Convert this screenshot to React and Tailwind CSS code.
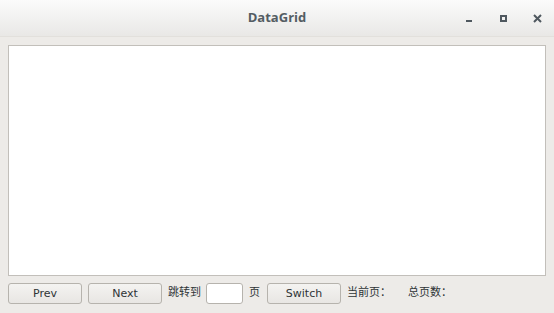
import React from 'react';

const Btn = ({ children, w = 'w-[74px]' }) => (
  <button className={`${w} h-[21px] rounded-[3px] border border-[#b6b3ad] bg-gradient-to-b from-[#f4f3f1] to-[#e8e6e3] text-[11px] text-[#2e3436] leading-none flex items-center justify-center`}>
    {children}
  </button>
);

const App = () => {
  return (
    <div className="w-[554px] h-[313px] flex flex-col bg-[#edebe8] overflow-hidden" style={{ fontFamily: '"DejaVu Sans", "Noto Sans CJK SC", sans-serif' }}>
      <div className="h-[37px] shrink-0 relative flex items-center justify-center bg-gradient-to-b from-[#fbfbfb] to-[#e9e8e6] border-b border-[#e2e0dc]">
        <span className="text-[13px] font-bold text-[#545d63]" style={{ fontFamily: '"Open Sans", "DejaVu Sans", sans-serif' }}>DataGrid</span>
        <div className="absolute right-0 top-0 h-full flex items-center">
          <div className="w-[34px] flex justify-center">
            <div className="w-[6px] h-[2px] bg-[#4f585f] mt-[6px]" />
          </div>
          <div className="w-[34px] flex justify-center">
            <div className="w-[7px] h-[7px] border-2 border-[#4f585f]" />
          </div>
          <div className="w-[34px] flex justify-center">
            <svg width="9" height="9" viewBox="0 0 9 9">
              <path d="M1 1L8 8M8 1L1 8" stroke="#4f585f" strokeWidth="2" />
            </svg>
          </div>
        </div>
      </div>
      <div className="flex-1 flex flex-col px-[8px] pt-[8px]">
        <div className="h-[231px] bg-white border border-[#c2bfba]" />
        <div className="flex items-center mt-[7px] text-[11px] text-[#2e3436]">
          <Btn>Prev</Btn>
          <div className="ml-[6px]"><Btn>Next</Btn></div>
          <span className="ml-[6px]">跳转到</span>
          <div className="ml-[5px] w-[37px] h-[21px] bg-white border border-[#b6b3ad] rounded-[3px]" />
          <span className="ml-[6px]">页</span>
          <div className="ml-[7px]"><Btn w="w-[74px]">Switch</Btn></div>
          <span className="ml-[6px]">当前页：</span>
          <span className="ml-[17px]">总页数：</span>
        </div>
      </div>
    </div>
  );
};

export default App;
